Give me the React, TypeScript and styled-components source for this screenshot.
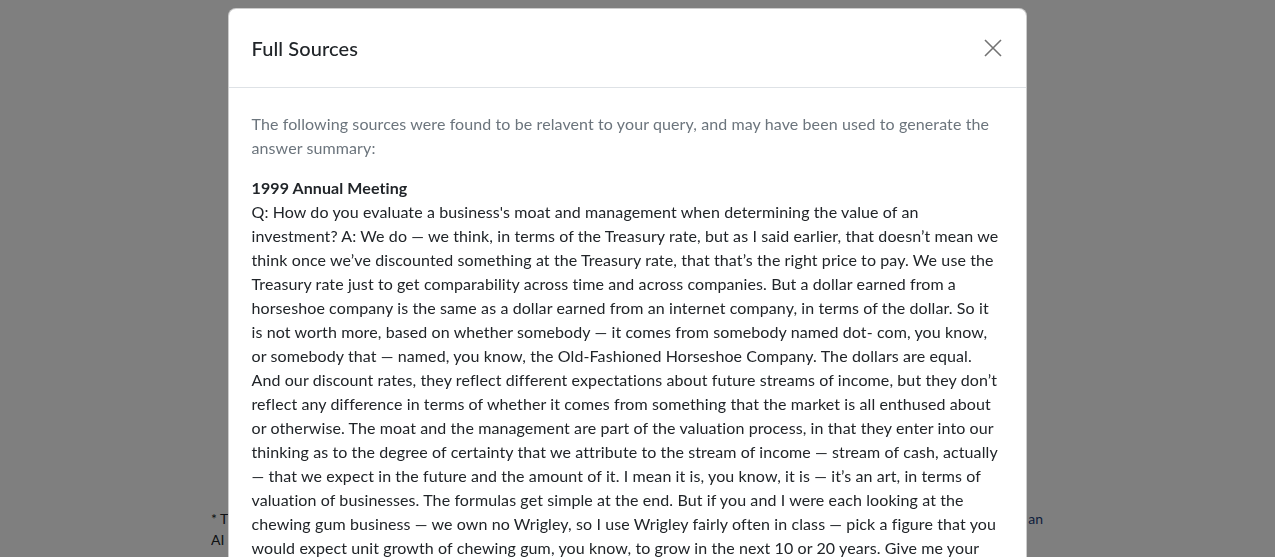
import React from "react";
import styled, { createGlobalStyle } from "styled-components";

const GlobalStyle = createGlobalStyle`
  * { box-sizing: border-box; }
  body {
    margin: 0;
    font-family: Lato, "Liberation Sans", sans-serif;
    color: #212529;
    background: #fff;
    overflow: hidden;
  }
`;

const SPage = styled.div`
  position: relative;
  height: 557px;
  overflow: hidden;
`;

const SFootnote = styled.div`
  position: absolute;
  left: 211px;
  top: 508px;
  width: 832px;
  font-size: 14px;
  line-height: 21px;
  color: #212529;
`;

const SFootRow = styled.div`
  display: flex;
  justify-content: space-between;
  white-space: nowrap;
  overflow: hidden;
`;

const SLink = styled.a`
  color: #1d3f7a;
  text-decoration: none;
`;

const SBackdrop = styled.div`
  position: fixed;
  inset: 0;
  background: rgba(0, 0, 0, 0.5);
  display: flex;
  justify-content: center;
  align-items: flex-start;
  padding: 8px 21px 0 0;
`;

const SModal = styled.div`
  width: 799px;
  background: #fff;
  border: 1px solid rgba(0, 0, 0, 0.2);
  border-radius: 8px;
  overflow: hidden;
`;

const SHeader = styled.div`
  display: flex;
  align-items: center;
  justify-content: space-between;
  padding: 24px 23px 24px 23px;
  border-bottom: 1px solid #dee2e6;
`;

const STitle = styled.h5`
  margin: 0;
  font-size: 20px;
  line-height: 30px;
  font-weight: 500;
  letter-spacing: 0.1px;
`;

const SClose = styled.button`
  width: 20px;
  height: 20px;
  padding: 0;
  margin-right: 0;
  border: 0;
  background: transparent;
  display: flex;
  align-items: center;
  justify-content: center;
  cursor: pointer;
`;

const SBody = styled.div`
  padding: 24px 23px;
  font-size: 16px;
  line-height: 24px;
  letter-spacing: 0.1px;
`;

const SIntro = styled.p`
  margin: 0 0 16px;
  color: #6c757d;
`;

const SSourceTitle = styled.div`
  font-weight: 700;
`;

const SSourceText = styled.p`
  margin: 0;
`;

const sourceText =
  "Q: How do you evaluate a business's moat and management when determining the value of an investment? A: We do \u2014 we think, in terms of the Treasury rate, but as I said earlier, that doesn\u2019t mean we think once we\u2019ve discounted something at the Treasury rate, that that\u2019s the right price to pay. We use the Treasury rate just to get comparability across time and across companies. But a dollar earned from a horseshoe company is the same as a dollar earned from an internet company, in terms of the dollar. So it is not worth more, based on whether somebody \u2014 it comes from somebody named dot- com, you know, or somebody that \u2014 named, you know, the Old-Fashioned Horseshoe Company. The dollars are equal. And our discount rates, they reflect different expectations about future streams of income, but they don\u2019t reflect any difference in terms of whether it comes from something that the market is all enthused about or otherwise. The moat and the management are part of the valuation process, in that they enter into our thinking as to the degree of certainty that we attribute to the stream of income \u2014 stream of cash, actually \u2014 that we expect in the future and the amount of it. I mean it is, you know, it is \u2014 it\u2019s an art, in terms of valuation of businesses. The formulas get simple at the end. But if you and I were each looking at the chewing gum business \u2014 we own no Wrigley, so I use Wrigley fairly often in class \u2014 pick a figure that you would expect unit growth of chewing gum, you know, to grow in the next 10 or 20 years. Give me your estimate, and I will give you mine, and we can argue about the numbers.";

const CloseIcon = () => (
  <svg width="18" height="18" viewBox="0 0 18 18" fill="none">
    <path d="M1 1L17 17M17 1L1 17" stroke="#737373" strokeWidth="1.6" />
  </svg>
);

export default function App() {
  return (
    <>
      <GlobalStyle />
      <SPage>
        <SFootnote>
          <SFootRow>
            <span>* This answer was written by</span>
            <SLink href="#">an</SLink>
          </SFootRow>
          <SFootRow>
            <span>AI model.</span>
          </SFootRow>
          <SFootRow>
            <span>.</span>
          </SFootRow>
        </SFootnote>
        <SBackdrop>
          <SModal>
            <SHeader>
              <STitle>Full Sources</STitle>
              <SClose aria-label="Close">
                <CloseIcon />
              </SClose>
            </SHeader>
            <SBody>
              <SIntro>
                The following sources were found to be relavent to your query, and may have been used to generate
                the answer summary:
              </SIntro>
              <SSourceTitle>1999 Annual Meeting</SSourceTitle>
              <SSourceText>{sourceText}</SSourceText>
            </SBody>
          </SModal>
        </SBackdrop>
      </SPage>
    </>
  );
}
